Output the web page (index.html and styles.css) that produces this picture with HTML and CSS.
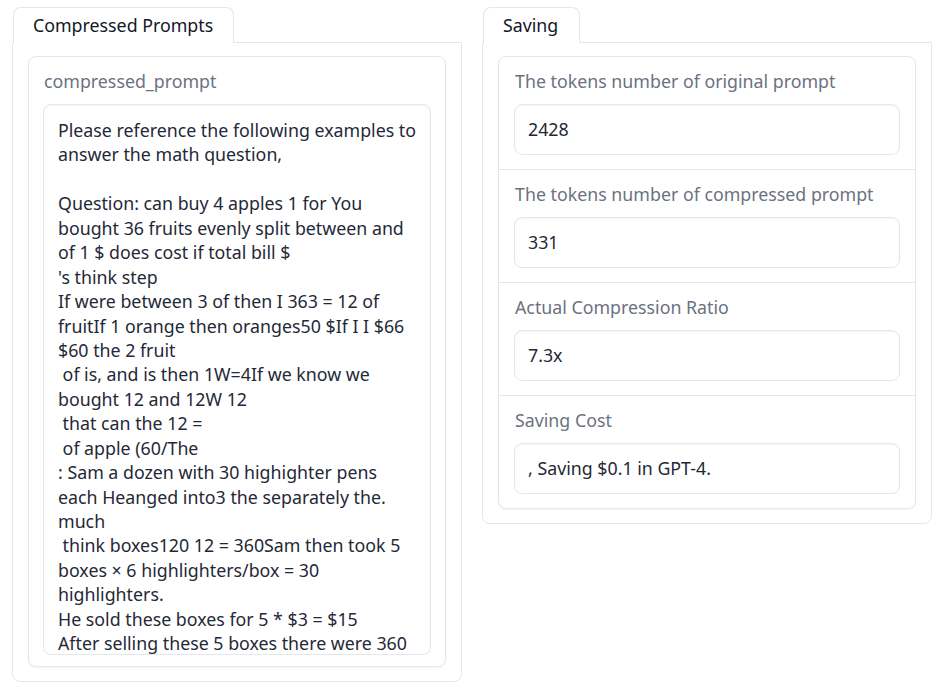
FILE: index.html
```html
<!DOCTYPE html>
<html>
<head>
<meta charset="utf-8">
<link rel="stylesheet" href="styles.css">
</head>
<body>
<div class="page">
  <section class="col">
    <div class="tab tab-wide">Compressed Prompts</div>
    <div class="panel panel-left">
      <div class="block">
        <div class="label">compressed_prompt</div>
        <div class="textarea">Please reference the following examples to
answer the math question,

Question: can buy 4 apples 1 for You
bought 36 fruits evenly split between and
of 1 $ does cost if total bill $
's think step
If were between 3 of then I 363 = 12 of
fruitIf 1 orange then oranges50 $If I I $66
$60 the 2 fruit
 of is, and is then 1W=4If we know we
bought 12 and 12W 12
 that can the 12 =
 of apple (60/The
: Sam a dozen with 30 highighter pens
each Heanged into3 the separately the.
much
 think boxes120 12 = 360Sam then took 5
boxes × 6 highlighters/box = 30
highlighters.
He sold these boxes for 5 * $3 = $15
After selling these 5 boxes there were 360</div>
      </div>
    </div>
  </section>
  <section class="col">
    <div class="tab tab-narrow">Saving</div>
    <div class="panel">
      <div class="block stack">
        <div class="row">
          <div class="label">The tokens number of original prompt</div>
          <div class="input">2428</div>
        </div>
        <div class="row">
          <div class="label">The tokens number of compressed prompt</div>
          <div class="input">331</div>
        </div>
        <div class="row">
          <div class="label">Actual Compression Ratio</div>
          <div class="input">7.3x</div>
        </div>
        <div class="row">
          <div class="label">Saving Cost</div>
          <div class="input">, Saving $0.1 in GPT-4.</div>
        </div>
      </div>
    </div>
  </section>
</div>
</body>
</html>
```

FILE: styles.css
```css
* { box-sizing: border-box; }
html, body { margin: 0; padding: 0; background: #ffffff; }
body {
  font-family: "Noto Sans", "Open Sans", sans-serif;
  color: #1f2937;
}
.page {
  display: flex;
  align-items: flex-start;
  gap: 20px;
  padding: 7px 9px 0 12px;
}
.col {
  width: 450px;
  display: flex;
  flex-direction: column;
}
.tab {
  align-self: flex-start;
  margin-left: 1px;
  height: 36px;
  margin-bottom: -1px;
  position: relative;
  z-index: 1;
  background: #fff;
  border: 1px solid #e5e7eb;
  border-bottom: none;
  border-radius: 8px 8px 0 0;
  padding: 0 19px;
  font-size: 17.8px;
  line-height: 35px;
  color: #111827;
}
.tab-wide { width: 221px; }
.tab-narrow { width: 97px; }
.panel {
  border: 1px solid #e5e7eb;
  border-radius: 0 0 8px 8px;
  padding: 13px 15px 14px 15px;
}
.block {
  border: 1px solid #e5e7eb;
  border-radius: 8px;
  box-shadow: 0 1px 2px rgba(0,0,0,0.05);
  background: #fff;
}
.panel-left .block {
  padding: 12px 14px 11px 14px;
}
.label {
  font-size: 17.8px;
  line-height: 24px;
  color: #6b7280;
  padding-left: 1px;
  margin-bottom: 11px;
}
.textarea {
  height: 551px;
  overflow: hidden;
  border: 1px solid #e5e7eb;
  border-radius: 8px;
  box-shadow: inset 0 1px 2px rgba(0,0,0,0.05);
  padding: 13px 13px 0 14px;
  font-size: 17.8px;
  line-height: 24.43px;
  white-space: pre;
  color: #1f2937;
}
.stack { display: flex; flex-direction: column; }
.row {
  height: 113px;
  padding: 12px 15px 0 15px;
  border-bottom: 1px solid #e5e7eb;
}
.row:last-child { border-bottom: none; height: 112px; }
.input {
  height: 51px;
  border: 1px solid #e5e7eb;
  border-radius: 8px;
  box-shadow: inset 0 1px 2px rgba(0,0,0,0.05);
  padding: 0 13px;
  font-size: 17.8px;
  line-height: 49px;
  color: #1f2937;
}
```
